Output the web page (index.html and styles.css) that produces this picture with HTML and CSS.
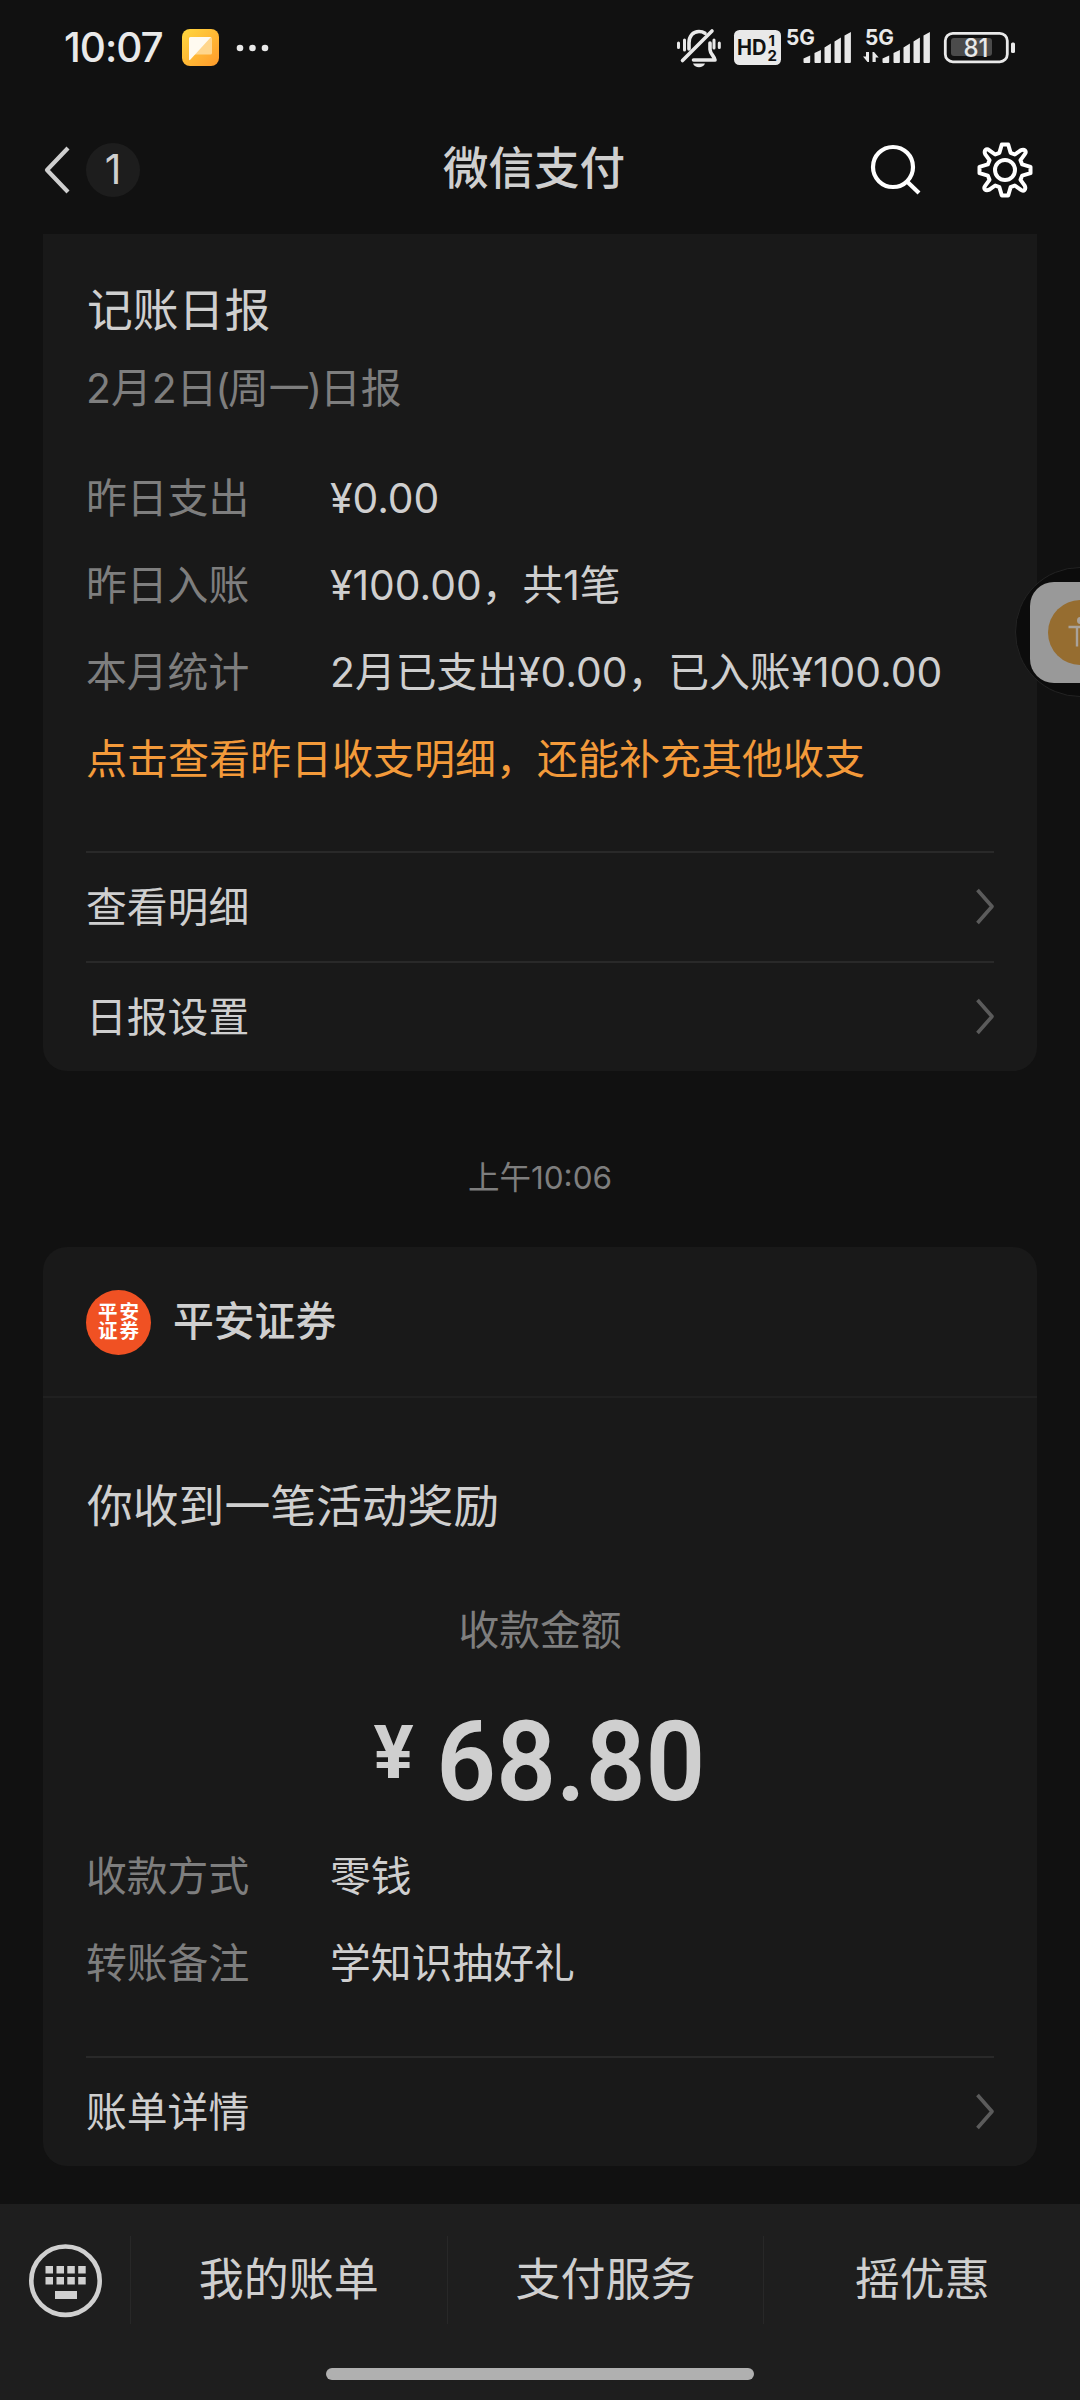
FILE: index.html
```html
<!DOCTYPE html>
<html lang="zh-CN">
<head>
<meta charset="utf-8">
<title>微信支付</title>
<link rel="stylesheet" href="styles.css">
</head>
<body>
<div class="screen">
  <header class="status">
    <span class="clock">10:07</span>
    <svg class="app-icon" viewBox="0 0 37 37" width="37" height="37">
      <defs>
        <linearGradient id="sun" x1="0" y1="0" x2="1" y2="1">
          <stop offset="0" stop-color="#ffd83f"/>
          <stop offset="1" stop-color="#ff9a2b"/>
        </linearGradient>
      </defs>
      <rect width="37" height="37" rx="8" fill="url(#sun)"/>
      <rect x="7" y="8" width="23" height="17.500" rx="1.500" fill="#ffd68c"/>
      <path d="M8.500 8H29L8 31a.6.6 0 0 1-1-.5V9.500A1.500 1.500 0 0 1 8.500 8z" fill="#fffaf0"/>
    </svg>
    <svg class="more" viewBox="0 0 34 8" width="34" height="8" fill="#e9e9e9">
      <circle cx="4" cy="4" r="3.300"/><circle cx="16.500" cy="4" r="3.300"/><circle cx="29" cy="4" r="3.300"/>
    </svg>
    <svg class="tray" viewBox="670 20 360 56" width="360" height="56" fill="#e9e9e9">
      <g fill="none" stroke="#e9e9e9" stroke-width="3.600" stroke-linecap="round" stroke-linejoin="round">
        <path d="M689 49V43C689 36 693 31.500 699 31.500c2.500 0 4.500.7 6 1.800"/>
        <path d="M712 31L682.500 60.500"/>
        <path d="M710 43v6.500c0 4 4.500 7 5 10.500H693.500"/>
        <path d="M684.500 40v10M678.500 43v4.500M714 40v8M719.300 43v4.500" stroke-width="3"/>
      </g>
      <path d="M693 63.500h12c-1 2.500-3.300 3.700-6 3.700s-5-1.200-6-3.700z"/>
      <rect x="734" y="30" width="47" height="35" rx="5.500"/>
      <g fill="#111" class="tray-text">
        <text x="737" y="55" font-size="21" textLength="29.500" lengthAdjust="spacingAndGlyphs">HD</text>
        <text x="768.500" y="45.500" font-size="15">1</text>
        <text x="767.500" y="60.500" font-size="15">2</text>
      </g>
      <text class="tray-text" x="786" y="45.300" font-size="21.500" textLength="29" lengthAdjust="spacingAndGlyphs">5G</text>
      <text class="tray-text" x="865" y="45.300" font-size="21.500" textLength="29" lengthAdjust="spacingAndGlyphs">5G</text>
      <g id="bars">
        <path d="M803.500 58.500l6.700-3V62a1 1 0 0 1-1 1h-4.700a1 1 0 0 1-1-1zM814.500 53l6.400-3V62a1 1 0 0 1-1 1h-4.400a1 1 0 0 1-1-1zM824.500 47.500l6.400-4V62a1 1 0 0 1-1 1h-4.400a1 1 0 0 1-1-1zM834.500 41.500l6.400-4V62a1 1 0 0 1-1 1h-4.400a1 1 0 0 1-1-1zM844.500 35.500l6.400-3.500V62a1 1 0 0 1-1 1h-4.400a1 1 0 0 1-1-1z"/>
      </g>
      <use href="#bars" x="79"/>
      <path d="M869 52v10h-1.500l-4.500-5.500h3V52zM872.500 62V52h1.500l4.700 5.500h-3V62z"/>
      <rect x="945.300" y="33.300" width="62" height="28.500" rx="7.500" fill="none" stroke="#e9e9e9" stroke-width="2.800"/>
      <rect x="951" y="38" width="41" height="18" rx="3" fill="#4b4b4b"/>
      <rect x="1011" y="42.500" width="4" height="10.500" rx="1.500"/>
      <text class="battery-text" x="963.500" y="57" font-size="25" textLength="25" lengthAdjust="spacingAndGlyphs">81</text>
    </svg>
  </header>

  <nav class="navbar">
    <svg class="back" viewBox="0 0 28 50" width="28" height="50" fill="none" stroke="#cfcfcf" stroke-width="4.200" stroke-linejoin="round"><path d="M25 3L4 25l21 22"/></svg>
    <span class="unread">1</span>
    <h1 class="nav-title">微信支付</h1>
    <svg class="search" viewBox="0 0 52 52" width="52" height="52" fill="none" stroke="#fff" stroke-width="4.200"><circle cx="24" cy="23" r="20"/><path d="M38 37.500L50 49"/></svg>
    <svg class="gear" viewBox="-28 -28 56 56" width="56" height="56" fill="none" stroke="#fff" stroke-width="4" stroke-linejoin="round">
      <circle r="10"/>
      <path d="M-3.200-25.500H3.200L5.600-17.200L9.800-15.500L15.600-19.700Q18.500-21 20-19.500T19.700-15.600L15.500-9.800L17.200-5.600L25.500-3.200V3.200L17.200 5.600L15.500 9.800L19.700 15.600Q21 18.500 19.500 20T15.600 19.700L9.800 15.500L5.600 17.200L3.200 25.500H-3.200L-5.600 17.200L-9.800 15.500L-15.600 19.700Q-18.500 21-20 19.500T-19.700 15.600L-15.500 9.800L-17.200 5.600L-25.500 3.200V-3.200L-17.200-5.600L-15.500-9.800L-19.700-15.600Q-21-18.500-19.500-20T-15.600-19.700L-9.800-15.500L-5.600-17.200Z"/>
    </svg>
  </nav>

  <main class="feed">
    <section class="card report">
      <h2 class="card-title">记账日报</h2>
      <p class="card-date">2月2日<span class="paren">(</span>周一<span class="paren">)</span>日报</p>
      <dl class="facts">
        <div class="fact"><dt>昨日支出</dt><dd>¥0.00</dd></div>
        <div class="fact"><dt>昨日入账</dt><dd>¥100.00，共1笔</dd></div>
        <div class="fact"><dt>本月统计</dt><dd>2月已支出¥0.00，已入账¥100.00</dd></div>
      </dl>
      <p class="hint">点击查看昨日收支明细，还能补充其他收支</p>
      <div class="links">
        <a class="link"><span>查看明细</span><svg viewBox="0 0 20 38" width="20" height="38"><path d="M3.500 2L18 18.500L3.500 35"/></svg></a>
        <a class="link"><span>日报设置</span><svg viewBox="0 0 20 38" width="20" height="38"><path d="M3.500 2L18 18.500L3.500 35"/></svg></a>
      </div>
    </section>

    <time class="stamp">上午10:06</time>

    <section class="card payment">
      <div class="merchant">
        <span class="logo"><span>平安</span><span>证券</span></span>
        <span class="merchant-name">平安证券</span>
      </div>
      <h2 class="card-title reward">你收到一笔活动奖励</h2>
      <p class="amount-label">收款金额</p>
      <p class="amount"><span class="yen">¥</span><span class="sum">68.80</span></p>
      <dl class="facts">
        <div class="fact"><dt>收款方式</dt><dd>零钱</dd></div>
        <div class="fact"><dt>转账备注</dt><dd>学知识抽好礼</dd></div>
      </dl>
      <div class="links">
        <a class="link"><span>账单详情</span><svg viewBox="0 0 20 38" width="20" height="38"><path d="M3.500 2L18 18.500L3.500 35"/></svg></a>
      </div>
    </section>
  </main>

  <footer class="dock">
    <div class="menu">
      <span class="keyboard">
        <svg viewBox="29 2244 74 74" width="74" height="74" fill="#d0d0d0">
          <circle cx="65.500" cy="2280.700" r="34.200" fill="none" stroke="#d0d0d0" stroke-width="4.600"/>
          <path d="M45.500 2266h7.500v7.500h-7.500zM56.500 2266h7.500v7.500h-7.500zM67.300 2266h7.500v7.500h-7.500zM78.200 2266h7.500v7.500h-7.500zM45.500 2277h7.500v7.500h-7.500zM56.500 2277h7.500v7.500h-7.500zM67.300 2277h7.500v7.500h-7.500zM78.200 2277h7.500v7.500h-7.500zM55 2291h22v8h-22z"/>
        </svg>
      </span>
      <a class="menu-item">我的账单</a>
      <a class="menu-item">支付服务</a>
      <a class="menu-item">摇优惠</a>
    </div>
    <div class="handle"></div>
  </footer>

  <div class="bubble">
    <div class="bubble-tile">
      <svg viewBox="-32.500 -32.500 65 65" width="65" height="65">
        <circle r="32.500" fill="#966d30"/>
        <circle cy="-12" r="3.500" fill="#a9a29a"/>
        <path d="M-12-5.500H12M-3.500-5.500V14M3.500-5.500V14" fill="none" stroke="#a9a29a" stroke-width="2.400"/>
      </svg>
    </div>
  </div>
</div>
</body>
</html>
```
FILE: styles.css
```css
* { box-sizing: border-box; }
body, h1, h2, p, dl, dd { margin: 0; }
body { background: #111; }

.screen {
  position: relative;
  display: flex;
  flex-direction: column;
  width: 1080px;
  height: 2400px;
  overflow: hidden;
  background: #111;
  color: #cfcfcf;
  font-family: Inter, "Noto Sans CJK SC", sans-serif;
  font-size: 40.8px;
  font-weight: 400;
}

/* Status bar */
.status {
  display: flex;
  align-items: center;
  height: 95px;
  padding: 0 50px 0 64px;
}
.clock {
  width: 118px;
  color: #e9e9e9;
  font-size: 40.5px;
  font-weight: 500;
  letter-spacing: -1px;
}
.more { margin-left: 17px; }
.tray { margin-left: auto; }
.tray-text { font-family: Inter, sans-serif; font-weight: 700; }
.battery-text { font-family: Inter, sans-serif; font-weight: 500; }

/* Navigation bar */
.navbar {
  display: flex;
  align-items: center;
  height: 139px;
  padding: 10px 47px 0 43px;
}
.navbar > * { flex: none; }
.unread {
  width: 54px;
  height: 54px;
  margin-left: 15px;
  border-radius: 50%;
  background: #1d1d1d;
  font-size: 41px;
  line-height: 53px;
  text-align: center;
}
.nav-title {
  margin: 0 0 2px 303px;
  font-size: 45.5px;
  font-weight: 500;
  line-height: 60px;
}
.search { margin-left: auto; }
.gear { margin-left: 56px; }

/* Cards */
.feed { flex: 1; padding: 0 43px; }
.card {
  padding: 0 43px;
  border-radius: 24px;
  background: #191919;
}
.report {
  height: 837px;
  padding-top: 47px;
  border-radius: 0 0 24px 24px;
}
.card-title {
  height: 60px;
  padding-left: 1px;
  font-size: 45.8px;
  font-weight: 400;
  line-height: 60px;
}
.card-date {
  height: 60px;
  margin-top: 17px;
  color: #7e7e7e;
  line-height: 60px;
}
.paren { margin: 0 -2.2px; }
.facts { margin-top: 37px; }
.fact { display: flex; height: 87px; line-height: 87px; }
.fact dt { width: 244px; color: #7e7e7e; }
.hint { height: 87px; color: #f39a3a; font-size: 41px; line-height: 87px; }
.links { margin-top: 48px; }
.link {
  display: flex;
  justify-content: space-between;
  align-items: center;
  height: 110px;
  border-top: 2px solid #292929;
}
.link span { margin-bottom: 6px; }
.link svg { fill: none; stroke: #5b5b5b; stroke-width: 3.6; stroke-linejoin: round; }

.stamp {
  display: block;
  height: 176px;
  color: #7e7e7e;
  font-size: 31.5px;
  line-height: 213px;
  text-align: center;
}

.payment { height: 919px; }
.merchant {
  display: flex;
  align-items: center;
  height: 151px;
  margin: 0 -43px;
  padding: 0 43px;
  border-bottom: 2px solid #202020;
}
.logo {
  display: flex;
  flex-direction: column;
  align-items: center;
  justify-content: center;
  width: 65px;
  height: 65px;
  margin-top: 1px;
  border-radius: 50%;
  background: #f05123;
  color: #fff;
  font-size: 19.5px;
  font-weight: 700;
  letter-spacing: 2px;
  line-height: 19.5px;
}
.logo span { margin-right: -2px; }
.merchant-name { margin: 0 0 6px 22px; font-weight: 500; }
.reward { margin-top: 79px; }
.amount-label {
  height: 60px;
  margin-top: 63px;
  color: #7e7e7e;
  line-height: 60px;
  text-align: center;
}
.amount {
  display: flex;
  justify-content: center;
  height: 173px;
  font-family: Roboto, sans-serif;
  font-weight: 600;
}
.yen { margin: 23px 0 0 8px; font-size: 75px; font-weight: 700; line-height: 138px; }
.sum {
  margin-left: 13px;
  font-size: 112px;
  line-height: 204px;
  transform: scaleX(.935);
}
.payment .facts { margin-top: 0; }
.payment .links { margin-top: 49px; }

/* Bottom menu */
.dock {
  display: flex;
  flex-direction: column;
  align-items: center;
  height: 196px;
  background: #1e1e1e;
}
.menu {
  display: flex;
  width: 1080px;
  height: 88px;
  margin-top: 32px;
}
.keyboard { width: 130px; padding: 8px 0 0 29px; }
.menu-item {
  flex: 1;
  border-left: 1px solid #282828;
  font-size: 45px;
  line-height: 88px;
  text-align: center;
}
.handle {
  width: 428px;
  height: 12px;
  margin-top: 44px;
  border-radius: 6px;
  background: #b0b0b0;
}

/* Floating shortcut docked on the right edge */
.bubble {
  position: absolute;
  top: 567px;
  left: 1015px;
  width: 130px;
  height: 130px;
  padding: 14px;
  border: 1px solid #232323;
  border-radius: 50%;
  background: #0c0c0c;
}
.bubble-tile {
  width: 101px;
  height: 101px;
  padding: 18px;
  border-radius: 24px;
  background: #999;
}
.bubble-tile svg { display: block; }
```
